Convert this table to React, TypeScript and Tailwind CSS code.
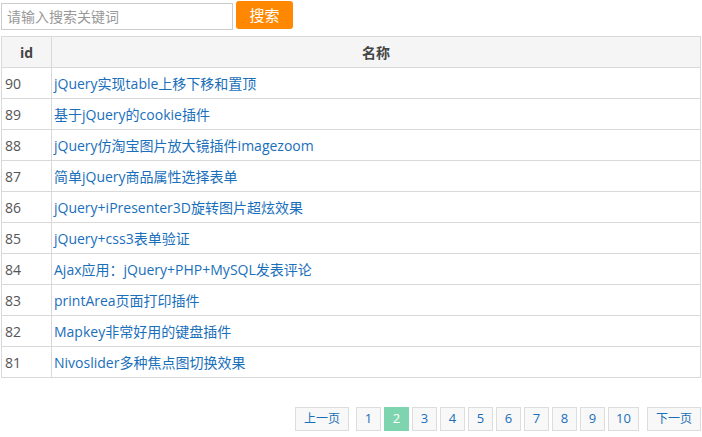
import React from "react";

const rows: [number, string][] = [
  [90, "jQuery实现table上移下移和置顶"],
  [89, "基于jQuery的cookie插件"],
  [88, "jQuery仿淘宝图片放大镜插件imagezoom"],
  [87, "简单jQuery商品属性选择表单"],
  [86, "jQuery+iPresenter3D旋转图片超炫效果"],
  [85, "jQuery+css3表单验证"],
  [84, "Ajax应用：jQuery+PHP+MySQL发表评论"],
  [83, "printArea页面打印插件"],
  [82, "Mapkey非常好用的键盘插件"],
  [81, "Nivoslider多种焦点图切换效果"],
];

export default function App() {
  const font = { fontFamily: '"Open Sans", "Noto Sans CJK SC", sans-serif' };
  return (
    <div className="w-[702px] h-[437px] bg-white text-[14px]" style={font}>
      <div className="flex items-start pt-[1px] pl-[1px] gap-[3px] h-[36px]">
        <input
          className="mt-[2px] w-[232px] h-[27px] border border-[#cccccc] px-[5px] text-[14px] text-[#333] placeholder:text-[#999] outline-none"
          placeholder="请输入搜索关键词"
        />
        <button className="w-[57px] h-[28px] rounded-[3px] bg-[#ff8800] text-white text-[15px] leading-[28px]">
          搜索
        </button>
      </div>
      <table className="ml-[1px] w-[700px] border-collapse">
        <thead>
          <tr className="h-[31px] bg-[#f5f5f5]">
            <th className="w-[50px] border border-[#d9d9d9] text-[#444] font-bold text-center">id</th>
            <th className="border border-[#d9d9d9] text-[#444] font-bold text-center">名称</th>
          </tr>
        </thead>
        <tbody>
          {rows.map(([id, name]) => (
            <tr key={id} className="h-[31px]">
              <td className="border border-[#d9d9d9] px-[3px] text-[#555]">{id}</td>
              <td className="border border-[#d9d9d9] px-[2px] text-[#1a6fbb]">{name}</td>
            </tr>
          ))}
        </tbody>
      </table>
      <div className="flex justify-end mt-[29px] pr-[1px] text-[13px] text-[#1a6fbb]">
        <div className="h-[24px] w-[54px] border border-[#dddddd] bg-[#f8f8f8] flex items-center justify-center text-[12px] mr-[7px]">上一页</div>
        <div className="flex gap-[3px]">
          {[1, 2, 3, 4, 5, 6, 7, 8, 9, 10].map((n) =>
            n === 2 ? (
              <div key={n} className="h-[24px] w-[25px] bg-[#7fd4b0] text-white flex items-center justify-center">{n}</div>
            ) : (
              <div key={n} className={`h-[24px] ${n === 10 ? "w-[31px]" : "w-[25px]"} border border-[#dddddd] bg-[#f8f8f8] flex items-center justify-center`}>{n}</div>
            )
          )}
        </div>
        <div className="h-[24px] w-[54px] border border-[#dddddd] bg-[#f8f8f8] flex items-center justify-center text-[12px] ml-[8px]">下一页</div>
      </div>
    </div>
  );
}
